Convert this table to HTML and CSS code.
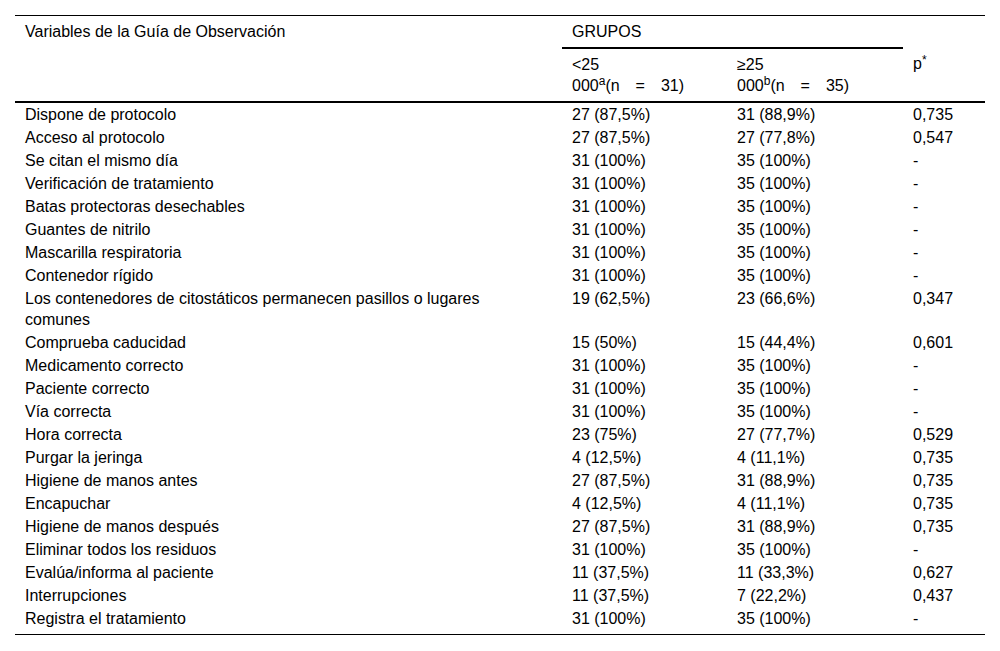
FILE: index.html
```html
<!DOCTYPE html>
<html lang="es">
<head>
<meta charset="utf-8">
<title>Tabla</title>
<link rel="stylesheet" href="styles.css">
</head>
<body>
<table class="data">
  <colgroup>
    <col class="c-var">
    <col class="c-g1">
    <col class="c-g2">
    <col class="c-p">
  </colgroup>
  <thead>
    <tr class="h1">
      <th rowspan="2">Variables de la Guía de Observación</th>
      <th colspan="2" class="grupos">GRUPOS</th>
      <th></th>
    </tr>
    <tr class="h2">
      <th>&lt;25<br>000<sup>a</sup>(n&emsp;=&emsp;31)</th>
      <th>≥25<br>000<sup>b</sup>(n&emsp;=&emsp;35)</th>
      <th class="pcol">p<sup>*</sup></th>
    </tr>
  </thead>
  <tbody>
    <tr><td>Dispone de protocolo</td><td>27 (87,5%)</td><td>31 (88,9%)</td><td>0,735</td></tr>
    <tr><td>Acceso al protocolo</td><td>27 (87,5%)</td><td>27 (77,8%)</td><td>0,547</td></tr>
    <tr><td>Se citan el mismo día</td><td>31 (100%)</td><td>35 (100%)</td><td>-</td></tr>
    <tr><td>Verificación de tratamiento</td><td>31 (100%)</td><td>35 (100%)</td><td>-</td></tr>
    <tr><td>Batas protectoras desechables</td><td>31 (100%)</td><td>35 (100%)</td><td>-</td></tr>
    <tr><td>Guantes de nitrilo</td><td>31 (100%)</td><td>35 (100%)</td><td>-</td></tr>
    <tr><td>Mascarilla respiratoria</td><td>31 (100%)</td><td>35 (100%)</td><td>-</td></tr>
    <tr><td>Contenedor rígido</td><td>31 (100%)</td><td>35 (100%)</td><td>-</td></tr>
    <tr><td><span class="wrap">Los contenedores de citostáticos permanecen pasillos o lugares comunes</span></td><td>19 (62,5%)</td><td>23 (66,6%)</td><td>0,347</td></tr>
    <tr><td>Comprueba caducidad</td><td>15 (50%)</td><td>15 (44,4%)</td><td>0,601</td></tr>
    <tr><td>Medicamento correcto</td><td>31 (100%)</td><td>35 (100%)</td><td>-</td></tr>
    <tr><td>Paciente correcto</td><td>31 (100%)</td><td>35 (100%)</td><td>-</td></tr>
    <tr><td>Vía correcta</td><td>31 (100%)</td><td>35 (100%)</td><td>-</td></tr>
    <tr><td>Hora correcta</td><td>23 (75%)</td><td>27 (77,7%)</td><td>0,529</td></tr>
    <tr><td>Purgar la jeringa</td><td>4 (12,5%)</td><td>4 (11,1%)</td><td>0,735</td></tr>
    <tr><td>Higiene de manos antes</td><td>27 (87,5%)</td><td>31 (88,9%)</td><td>0,735</td></tr>
    <tr><td>Encapuchar</td><td>4 (12,5%)</td><td>4 (11,1%)</td><td>0,735</td></tr>
    <tr><td>Higiene de manos después</td><td>27 (87,5%)</td><td>31 (88,9%)</td><td>0,735</td></tr>
    <tr><td>Eliminar todos los residuos</td><td>31 (100%)</td><td>35 (100%)</td><td>-</td></tr>
    <tr><td>Evalúa/informa al paciente</td><td>11 (37,5%)</td><td>11 (33,3%)</td><td>0,627</td></tr>
    <tr><td>Interrupciones</td><td>11 (37,5%)</td><td>7 (22,2%)</td><td>0,437</td></tr>
    <tr class="last"><td>Registra el tratamiento</td><td>31 (100%)</td><td>35 (100%)</td><td>-</td></tr>
  </tbody>
</table>
</body>
</html>
```
FILE: styles.css
```css
html, body {
  margin: 0;
  padding: 0;
  background: #fff;
}
body {
  padding: 15px;
  font-family: "Liberation Sans", Arial, sans-serif;
  font-size: 16px;
  line-height: 21px;
  color: #000;
}
.data {
  width: 970px;
  border-collapse: collapse;
  table-layout: fixed;
  border-top: 1px solid #000;
  border-bottom: 1px solid #000;
}
.c-var { width: 547px; }
.c-g1 { width: 165px; }
.c-g2 { width: 176px; }
.c-p { width: 82px; }
.data th {
  font-weight: normal;
  text-align: left;
  vertical-align: top;
  padding: 5px 10px;
}
.data thead .h2 th {
  border-bottom: 2px solid #000;
}
.data thead .h1 th:first-child {
  border-bottom: 2px solid #000;
}
.data .grupos {
  border-bottom: 2px solid #000;
}
.data sup {
  font-size: 12px;
  line-height: 0;
  vertical-align: 6px;
}
.data .pcol sup {
  vertical-align: 5px;
}
.data td {
  vertical-align: top;
  padding: 1px 10px;
}
.data .last td {
  padding-bottom: 5px;
}
.wrap {
  display: inline-block;
  max-width: 490px;
}
```
